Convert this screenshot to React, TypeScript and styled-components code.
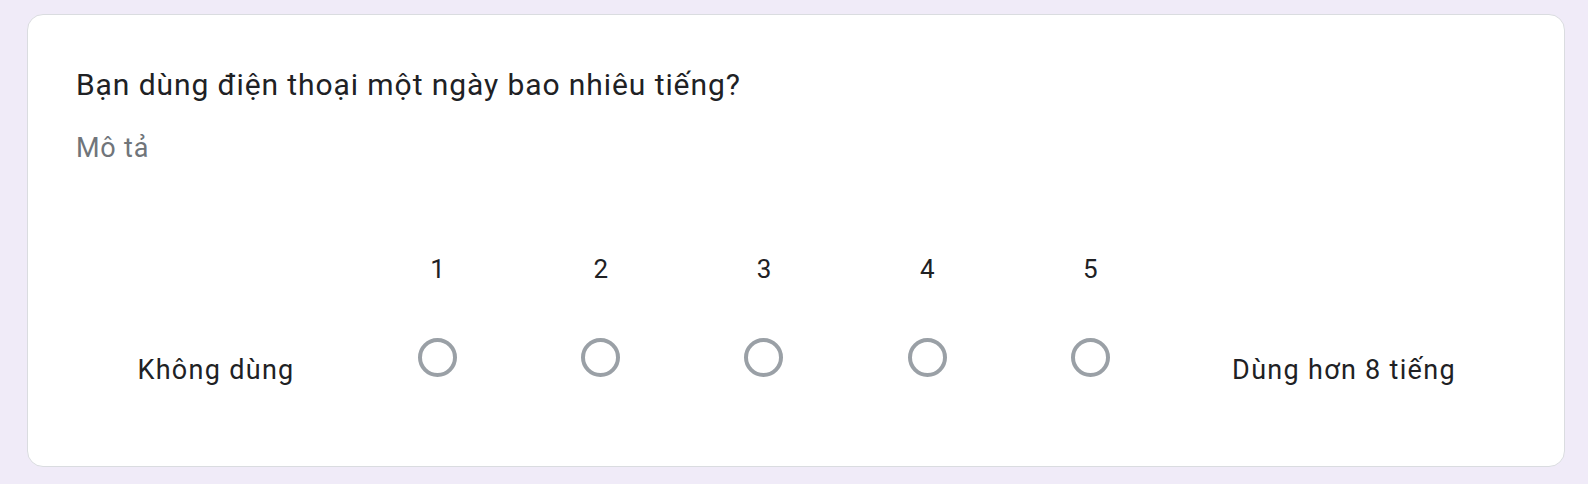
import React from "react";
import styled, { createGlobalStyle } from "styled-components";

const Global = createGlobalStyle`
  html, body { margin: 0; padding: 0; background: #f0ebf8; }
  body { font-family: Roboto, "Noto Sans", Arial, sans-serif; color: #202124; }
`;

const Page = styled.div`
  padding: 14px 23px 17px 27px;
`;

const Card = styled.section`
  box-sizing: border-box;
  height: 453px;
  background: #fff;
  border: 1px solid #dadce0;
  border-radius: 16px;
  padding: 50px 48px 0 48px;
  display: flex;
  flex-direction: column;
`;

const Title = styled.h2`
  margin: 0;
  font-size: 30px;
  line-height: 40px;
  font-weight: 400;
  letter-spacing: 0.92px;
  color: #202124;
`;

const Description = styled.p`
  margin: 25px 0 0;
  font-size: 27px;
  line-height: 36px;
  letter-spacing: 0.8px;
  color: #70757a;
`;

const Scale = styled.div`
  display: grid;
  grid-template-columns: 280px repeat(5, 1fr) 344px;
  align-items: end;
  margin-top: 87px;
`;

const EndLabel = styled.div`
  text-align: center;
  font-size: 27px;
  line-height: 32px;
  letter-spacing: 1.3px;
  color: #202124;
`;

const Option = styled.label`
  display: flex;
  flex-direction: column;
  align-items: center;
  gap: 53px;
  padding-bottom: 9px;
`;

const Number = styled.span`
  font-size: 26px;
  line-height: 32px;
  color: #202124;
`;

const Radio = styled.span`
  box-sizing: border-box;
  width: 39px;
  height: 39px;
  border-radius: 50%;
  border: 4px solid #9aa0a6;
`;

export default function App() {
  const options = [1, 2, 3, 4, 5];
  return (
    <>
      <Global />
      <Page>
        <Card>
          <Title>Bạn dùng điện thoại một ngày bao nhiêu tiếng?</Title>
          <Description>Mô tả</Description>
          <Scale>
            <EndLabel>Không dùng</EndLabel>
            {options.map((n) => (
              <Option key={n}>
                <Number>{n}</Number>
                <Radio />
              </Option>
            ))}
            <EndLabel>Dùng hơn 8 tiếng</EndLabel>
          </Scale>
        </Card>
      </Page>
    </>
  );
}
